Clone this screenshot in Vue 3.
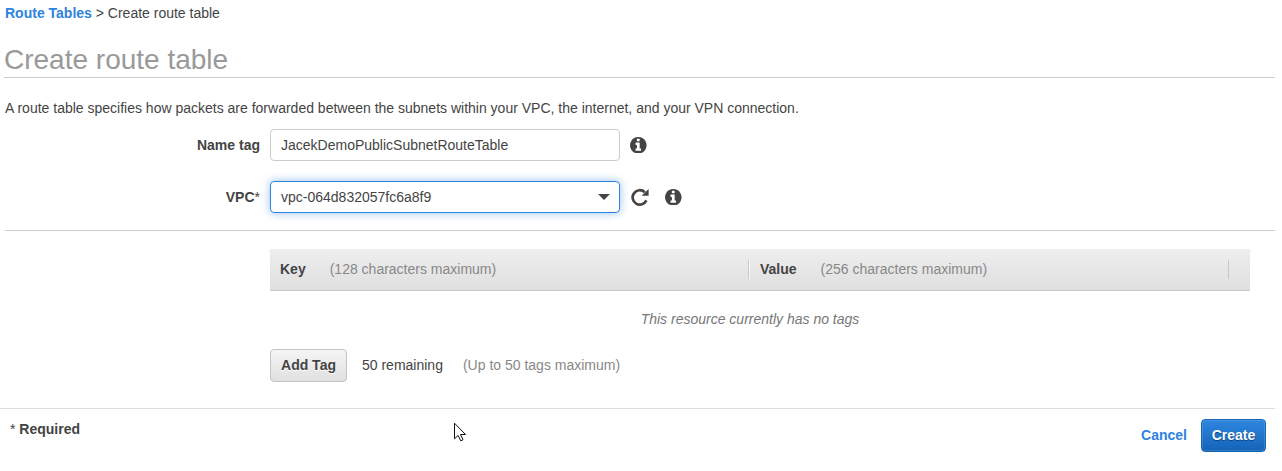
<script setup>
const infoPath = 'M1152 1376v-160q0-14-9-23t-23-9h-96v-512q0-14-9-23t-23-9h-320q-14 0-23 9t-9 23v160q0 14 9 23t23 9h96v320h-96q-14 0-23 9t-9 23v160q0 14 9 23t23 9h448q14 0 23-9t9-23zm-128-896v-160q0-14-9-23t-23-9h-192q-14 0-23 9t-9 23v160q0 14 9 23t23 9h192q14 0 23-9t9-23zm640 416q0 209-103 385.5t-279.5 279.5-385.5 103-385.5-103-279.5-279.5-103-385.5 103-385.5 279.5-279.5 385.5-103 385.5 103 279.5 279.5 103 385.5z'
</script>

<template>
  <div class="page">
    <nav class="crumbs"><a>Route Tables</a> &gt; Create route table</nav>
    <h1>Create route table</h1>
    <p class="intro">A route table specifies how packets are forwarded between the subnets within your VPC, the internet, and your VPN connection.</p>

    <div class="field">
      <label>Name tag</label>
      <div class="box">JacekDemoPublicSubnetRouteTable</div>
      <svg class="info" viewBox="128 128 1536 1536"><path :d="infoPath" /></svg>
    </div>
    <div class="field vpc">
      <label>VPC<span class="star">*</span></label>
      <div class="box focused">
        <span>vpc-064d832057fc6a8f9</span>
        <svg class="caret" viewBox="0 0 12 6"><path d="M0 0h12L6 6z" /></svg>
      </div>
      <svg class="refresh" viewBox="0 0 18 18">
        <path d="M15.4 12.4A7.2 7.2 0 1 1 13.8 4.2" fill="none" stroke="#444" stroke-width="2.7" />
        <path d="M17.6 1v6.8h-7z" fill="#444" />
      </svg>
      <svg class="info" viewBox="128 128 1536 1536"><path :d="infoPath" /></svg>
    </div>

    <section class="tags">
      <div class="head">
        <div class="col key"><b>Key</b><span>(128 characters maximum)</span></div>
        <div class="col value"><b>Value</b><span>(256 characters maximum)</span></div>
      </div>
      <p class="empty">This resource currently has no tags</p>
      <div class="add">
        <button class="btn">Add Tag</button>
        <span class="remaining">50 remaining</span>
        <span class="limit">(Up to 50 tags maximum)</span>
      </div>
    </section>

    <footer>
      <div class="required"><span>*</span> <b>Required</b></div>
      <div class="actions"><a>Cancel</a><button class="btn primary">Create</button></div>
    </footer>

    <svg class="cursor" viewBox="0 0 13 20"><path d="M.5 1.2v15.6l3.6-3.4 2.6 5.4 2.3-1-2.5-5.3h5z" fill="#fff" stroke="#101018" /></svg>
  </div>
</template>

<style>
body { background: #fff; }
</style>

<style scoped>
.page {
  position: relative;
  box-sizing: border-box;
  width: 1275px;
  height: 471px;
  color: #444;
  font: 14px/20px "Liberation Sans", Arial, sans-serif;
}
a { color: #2e83de; font-weight: bold; }
.crumbs { padding: 3px 0 0 5px; }
h1 {
  margin: 16px 0 0 4px;
  height: 38px;
  border-bottom: 1px solid #ccc;
  font-size: 28px;
  line-height: 41px;
  font-weight: normal;
  color: #999;
}
.intro { margin: 20px 0 0 5px; }
.field { display: flex; align-items: center; height: 32px; margin-top: 11px; }
.field.vpc { margin-top: 20px; }
label { width: 260px; margin-right: 10px; text-align: right; font-weight: bold; }
.star { font-weight: normal; }
.box {
  box-sizing: border-box;
  display: flex;
  align-items: center;
  justify-content: space-between;
  width: 350px;
  height: 32px;
  padding: 0 9px 0 10px;
  border: 1px solid #ccc;
  border-radius: 4px;
}
.focused { border-color: #2e83de; box-shadow: 0 0 8px rgba(46, 131, 222, .5); }
.info { width: 16.6px; height: 16.6px; margin-left: 10px; fill: #444; }
.caret { width: 12px; height: 6px; fill: #444; }
.refresh { width: 18px; height: 18px; margin-left: 11px; }
.refresh + .info { margin-left: 16px; }
.tags {
  margin: 17px 0 0 5px;
  padding: 18px 25px 0 265px;
  height: 159px;
  border-top: 1px solid #ccc;
}
.head {
  box-sizing: border-box;
  display: flex;
  align-items: center;
  height: 42px;
  border-bottom: 1px solid #c8c8c8;
  background: linear-gradient(#eee, #dfdfdf);
}
.col {
  box-sizing: border-box;
  display: flex;
  height: 19px;
  padding-left: 10px;
  border-right: 1px solid #c8c8c8;
  line-height: 18px;
}
.col span { color: #888; margin-left: 24px; }
.key { width: 479px; }
.value { width: 480px; padding-left: 11px; box-shadow: inset 1px 0 #f8f8f8; }
.empty { margin: 18px 0 0; padding-right: 20px; text-align: center; font-style: italic; color: #777; }
.add { display: flex; align-items: flex-start; margin-top: 20px; line-height: 32px; }
.btn {
  box-sizing: border-box;
  width: 77px;
  height: 33px;
  padding: 0 0 1px;
  border: 1px solid #c4c4c4;
  border-radius: 4px;
  background: linear-gradient(#f5f5f5, #e0e0e0);
  color: #444;
  font: bold 14px "Liberation Sans", Arial, sans-serif;
  text-shadow: 0 1px #fff;
}
.remaining { margin-left: 15px; }
.limit { margin-left: 20px; color: #888; }
footer {
  display: flex;
  justify-content: space-between;
  box-sizing: border-box;
  height: 63px;
  padding: 10px 9px 0 10px;
  border-top: 1px solid #ddd;
}
.actions { display: flex; align-items: flex-start; line-height: 32px; height: 33px; gap: 14px; }
.primary {
  width: 65px;
  border-color: #1565b5;
  background: linear-gradient(#2e86de, #1464b8);
  box-shadow: inset 0 0 0 1px rgba(255, 255, 255, .13);
  color: #fff;
  text-shadow: 0 1px 1px #0b427d;
}
.cursor { position: absolute; left: 454px; top: 422px; width: 13px; height: 20px; }
</style>
